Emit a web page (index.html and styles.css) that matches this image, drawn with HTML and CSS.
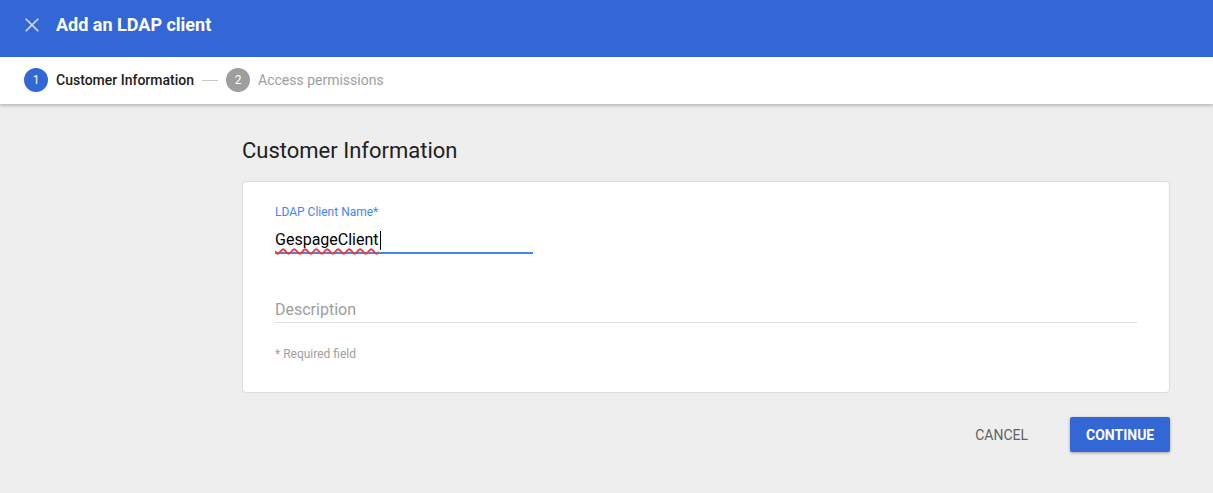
FILE: index.html
```html
<!DOCTYPE html>
<html>
<head>
<meta charset="utf-8">
<link rel="stylesheet" href="styles.css">
</head>
<body>
<header class="topbar">
  <svg class="close" width="14" height="14" viewBox="0 0 14 14"><path d="M0.7 0.7 L13.3 13.3 M13.3 0.7 L0.7 13.3" stroke="#d6e0f7" stroke-width="1.6" fill="none"/></svg>
  <h1 class="title">Add an LDAP client</h1>
</header>
<nav class="stepper">
  <div class="step active"><span class="num">1</span><span class="label">Customer Information</span></div>
  <span class="connector"></span>
  <div class="step"><span class="num">2</span><span class="label">Access permissions</span></div>
</nav>
<main class="content">
  <h2 class="heading">Customer Information</h2>
  <section class="card">
    <div class="field focused">
      <label class="flabel">LDAP Client Name*</label>
      <div class="fvalue"><span class="typed">GespageClient</span><span class="caret"></span></div>
    </div>
    <div class="field desc">
      <div class="placeholder">Description</div>
    </div>
    <div class="hint">* Required field</div>
  </section>
  <div class="actions">
    <button class="btn flat">CANCEL</button>
    <button class="btn raised">CONTINUE</button>
  </div>
</main>
</body>
</html>
```
FILE: styles.css
```css
* { box-sizing: border-box; }
html, body { margin: 0; padding: 0; }
body {
  font-family: Roboto, "Noto Sans", Arial, sans-serif;
  background: #eeeeee;
  width: 1213px;
  height: 493px;
  overflow: hidden;
}
.topbar {
  height: 57px;
  background: #3367d6;
  display: flex;
  align-items: center;
  padding-left: 25px;
  padding-bottom: 7px;
}
.close { margin-right: 17px; }
.title {
  margin: 0;
  color: #fff;
  font-size: 18px;
  font-weight: 700;
  line-height: 24px;
}
.stepper {
  height: 47px;
  background: #fff;
  display: flex;
  align-items: center;
  padding-left: 24px;
  padding-bottom: 1px;
  box-shadow: 0 2px 3px rgba(0,0,0,0.22);
  position: relative;
}
.step { display: flex; align-items: center; }
.num {
  width: 24px; height: 24px;
  border-radius: 50%;
  background: #9e9e9e;
  color: #fff;
  font-size: 12px;
  display: flex; align-items: center; justify-content: center;
  margin-right: 8px;
}
.step.active .num { background: #3367d6; }
.label { font-size: 14px; color: #9e9e9e; }
.step.active .label { color: #212121; font-weight: 500; }
.connector {
  width: 16px; height: 1px; background: #c8c8c8;
  margin: 0 8px;
}
.content {
  padding: 0 43px 0 242px;
}
.heading {
  margin: 0;
  padding-top: 33px;
  height: 77px;
  font-size: 22px;
  font-weight: 400;
  color: #212121;
  line-height: 28px;
}
.card {
  background: #fff;
  border: 1px solid #dcdcdc;
  border-radius: 4px;
  padding: 22px 32px 30px 32px;
  height: 212px;
}
.field.focused { width: 258px; }
.flabel {
  display: block;
  font-size: 12px;
  color: #4285f4;
  line-height: 16px;
}
.fvalue {
  font-size: 16px;
  color: #000;
  line-height: 20px;
  margin-top: 10px;
  padding-bottom: 2px;
  border-bottom: 2px solid #4285f4;
  display: flex;
  align-items: center;
}
.typed {
  text-decoration: underline wavy #f03a3a;
  text-decoration-thickness: 1.5px;
  text-underline-offset: 3px;
}
.caret { width: 1px; height: 19px; background: #000; margin-left: 1px; }
.field.desc {
  margin-top: 46px;
  border-bottom: 1px solid #dcdcdc;
  padding-bottom: 2px;
}
.placeholder { font-size: 16px; color: #9e9e9e; line-height: 20px; }
.hint {
  margin-top: 23px;
  font-size: 12px;
  color: #9e9e9e;
  line-height: 16px;
}
.actions {
  display: flex;
  justify-content: flex-end;
  align-items: center;
  margin-top: 24px;
  gap: 26px;
}
.btn {
  font-family: Roboto, "Noto Sans", Arial, sans-serif;
  font-size: 14px;
  font-weight: 500;
  border: none;
  border-radius: 2px;
  height: 35px;
  padding: 0 16px;
  cursor: pointer;
}
.btn.flat { background: transparent; color: #616161; font-weight: 400; }
.btn.raised {
  background: #3367d6;
  color: #fff;
  width: 100px;
  font-weight: 700;
  box-shadow: 0 1px 3px rgba(0,0,0,0.35);
}
```
